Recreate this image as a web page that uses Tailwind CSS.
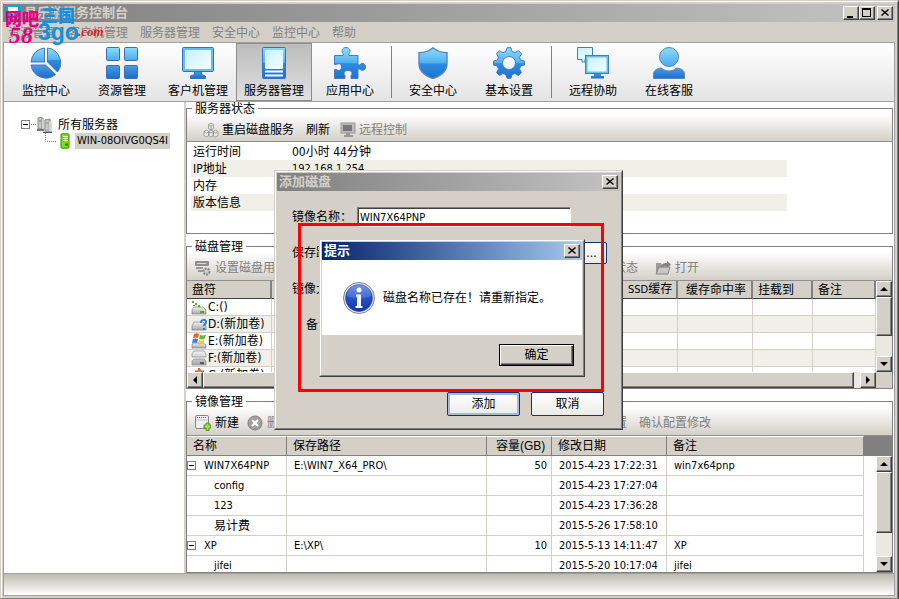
<!DOCTYPE html>
<html lang="zh-CN">
<head>
    <meta charset="UTF-8">
    <meta name="viewport" content="width=device-width, initial-scale=1.0">
    <title>易乐游服务控制台</title>
    <script src="https://cdn.jsdelivr.net/npm/@tailwindcss/browser@4"></script>
</head>
<body class="h-screen overflow-hidden bg-[#d4d0c8] font-['DejaVu_Sans_Condensed','Noto_Sans','Noto_Sans_CJK_SC',sans-serif] text-[12px] leading-4 text-black">

    <!-- Shared gradients -->
    <svg class="absolute h-0 w-0" aria-hidden="true">
        <defs>
            <linearGradient id="blue" x1="0" y1="0" x2="0" y2="1">
                <stop offset="0" stop-color="#8fdcfa"/>
                <stop offset=".5" stop-color="#4fb0ee"/>
                <stop offset=".52" stop-color="#2c8ce0"/>
                <stop offset="1" stop-color="#1a72d0"/>
            </linearGradient>
            <linearGradient id="light" x1="0" y1="0" x2="0" y2="1">
                <stop offset="0" stop-color="#8adcf8"/>
                <stop offset="1" stop-color="#4aaaf0"/>
            </linearGradient>
            <linearGradient id="deep" x1="0" y1="0" x2="0" y2="1">
                <stop offset="0" stop-color="#4a9ce4"/>
                <stop offset="1" stop-color="#1a6ccc"/>
            </linearGradient>
            <linearGradient id="screen" x1="0" y1="0" x2="1" y2="1">
                <stop offset="0" stop-color="#c8f2fd"/>
                <stop offset="1" stop-color="#f4fdff"/>
            </linearGradient>
            <linearGradient id="info" x1="0" y1="0" x2="0" y2="1">
                <stop offset="0" stop-color="#5c82e0"/>
                <stop offset=".5" stop-color="#2450c8"/>
                <stop offset="1" stop-color="#1434a8"/>
            </linearGradient>
            <linearGradient id="drive" x1="0" y1="0" x2="0" y2="1">
                <stop offset="0" stop-color="#f4f4f4"/>
                <stop offset="1" stop-color="#a4a6ac"/>
            </linearGradient>
        </defs>
    </svg>

    <div class="relative flex h-full flex-col border border-[#d4d0c8] border-r-[#404040] border-b-[#808080]">
        <div class="flex min-h-0 flex-1 flex-col border-t border-l border-r border-white border-r-[#808080] pt-[2px] pr-[2px] pb-[2px] pl-px">

            <!-- Title bar -->
            <header class="flex h-[18px] shrink-0 items-center bg-linear-to-r from-[#808080] to-[#c3c3c3] pr-[2px] pl-[2px]">
                <svg class="h-4 w-4" viewBox="0 0 16 16"><rect width="16" height="16" fill="#18a0d8"/><rect x="3" y="2" width="10" height="6" fill="#fff"/><path d="M2 13h12M8 8v5" stroke="#fff"/></svg>
                <h1 class="ml-[3px] flex-1 text-[13px] font-bold text-[#d4d0c8]">易乐游服务控制台</h1>
                <button aria-label="最小化" class="h-[14px] w-4 border border-white border-r-[#404040] border-b-[#404040] bg-[#d4d0c8] shadow-[inset_-1px_-1px_#808080]"><svg class="h-3 w-[14px]" viewBox="0 0 14 12"><path d="M3 9h6v2H3z"/></svg></button>
                <button aria-label="最大化" class="h-[14px] w-4 border border-white border-r-[#404040] border-b-[#404040] bg-[#d4d0c8] shadow-[inset_-1px_-1px_#808080]"><svg class="h-3 w-[14px]" viewBox="0 0 14 12"><path d="M2 1h9v9H2zM3 3v6h7V3z" fill-rule="evenodd"/></svg></button>
                <button aria-label="关闭" class="ml-[2px] h-[14px] w-4 border border-white border-r-[#404040] border-b-[#404040] bg-[#d4d0c8] shadow-[inset_-1px_-1px_#808080]"><svg class="h-3 w-[14px]" viewBox="0 0 14 12"><path d="M3.500 2.500l7 6M10.500 2.500l-7 6" stroke="#000" stroke-width="1.500"/></svg></button>
            </header>

            <!-- Menu -->
            <nav class="flex h-5 shrink-0 items-center gap-3 pt-px pl-[5px] text-[#808080]">
                <a href="#">资源管理</a>
                <a href="#">客户机管理</a>
                <a href="#">服务器管理</a>
                <a href="#">安全中心</a>
                <a href="#">监控中心</a>
                <a href="#">帮助</a>
            </nav>

            <!-- Main toolbar -->
            <div class="flex h-[60px] shrink-0 border border-[#a0a0a0] bg-linear-to-b from-white to-[#e4e4e4] pl-1">
                <button class="flex w-[76px] flex-col items-center gap-1 pt-1">
                    <svg class="h-8 w-8" viewBox="0 0 32 32" stroke="#4a78b8" stroke-width="1"><path d="M14.500 1A15 15 0 0 0 1 15h13.500z" fill="url(#light)"/><path d="M17.500 1v14l10 10A15 15 0 0 0 17.500 1z" fill="url(#blue)"/><path d="M1 18h14.500l10 9.500A15 15 0 0 1 1 18z" fill="url(#deep)"/></svg>
                    <span>监控中心</span>
                </button>
                <button class="flex w-[76px] flex-col items-center gap-1 pt-1">
                    <svg class="h-8 w-8" viewBox="0 0 32 32" stroke="#3c6cb4"><rect x=".5" y=".5" width="13" height="13" rx="1" fill="url(#light)"/><rect x="18.500" y=".5" width="13" height="13" rx="1" fill="url(#light)"/><rect x=".5" y="18.500" width="13" height="13" rx="1" fill="url(#deep)"/><rect x="18.500" y="18.500" width="13" height="13" rx="1" fill="url(#deep)"/></svg>
                    <span>资源管理</span>
                </button>
                <button class="flex w-[76px] flex-col items-center gap-1 pt-1">
                    <svg class="h-8 w-8" viewBox="0 0 32 32" stroke="#3470c4"><path d="M12.500 24h7v3.500l4 1.500v2.500h-15V29l4-1.500z" fill="url(#deep)"/><rect x=".5" y=".5" width="31" height="24" rx="1" fill="#64bcf4"/><rect x="3" y="3" width="26" height="19" fill="url(#screen)" stroke="none"/></svg>
                    <span>客户机管理</span>
                </button>
                <button aria-pressed="true" class="flex w-[76px] flex-col items-center gap-1 border border-[#8c8c8c] bg-linear-to-b from-[#bcbcbc] to-[#e0e0e0] pt-[3px]">
                    <svg class="h-8 w-8" viewBox="0 0 32 32"><rect x="4.500" y=".5" width="23" height="31" rx="1" fill="url(#blue)" stroke="#3470c4"/><rect x="7" y="3" width="18" height="19" rx="1" fill="url(#screen)"/><path d="M7 24.500h18M7 28.500h18" stroke="#fff" stroke-width="2"/></svg>
                    <span>服务器管理</span>
                </button>
                <button class="flex w-[76px] flex-col items-center gap-1 pt-1">
                    <svg class="h-8 w-8" viewBox="0 0 32 32"><path d="M.5 8.500h8.500V6.500c-2-2-1-6 3-6s5 4 3 6v2h9v9.500h2c1-3 5.500-2 5.500 2s-4.500 4-5.500 2h-2v9.500h-7v-3c2-2 1-5-3-5s-5 3-3 5v3H.5v-9h2c2 2 5 1 5-2.500s-3-4-5-2.500h-2z" fill="url(#blue)" stroke="#4a7cc0"/></svg>
                    <span>应用中心</span>
                </button>
                <div class="mx-[3px] my-[3px] w-px bg-[#808080]"></div>
                <button class="flex w-[76px] flex-col items-center gap-1 pt-1">
                    <svg class="h-8 w-8" viewBox="0 0 32 32"><path d="M16 .7c4 3.300 8 5 14 5v11c0 7-6 12-14 14.800C8 28.700 2 23.700 2 16.700v-11c6 0 10-1.700 14-5z" fill="url(#blue)" stroke="#5a84bc" stroke-width="1.400"/></svg>
                    <span>安全中心</span>
                </button>
                <button class="flex w-[76px] flex-col items-center gap-1 pt-1">
                    <svg class="h-8 w-8" viewBox="0 0 32 32"><path fill-rule="evenodd" stroke-linejoin="round" d="M14 .7h4l1 3.800 3 1.200 3.500-2 3 3-2 3.600 1.200 2.700 3.800 1v4l-3.800 1-1.200 3 2 3.500-3 3-3.500-2-3 1.200-1 3.600h-4l-1-3.600-3-1.200-3.500 2-3-3 2-3.500-1.200-3L.5 18v-4l3.800-1 1.200-2.700-2-3.600 3-3 3.500 2 3-1.200zM16 9.500a6.500 6.500 0 1 0 0 13 6.500 6.500 0 0 0 0-13z" fill="url(#blue)" stroke="#4a7cc0"/></svg>
                    <span>基本设置</span>
                </button>
                <div class="my-[3px] mr-[3px] ml-1 w-px bg-[#808080]"></div>
                <button class="flex w-[76px] flex-col items-center gap-1 pt-1">
                    <svg class="h-8 w-8" viewBox="0 0 32 32" stroke="#3a7cd0"><path d="M.5.5h15v12H8v2.500H5v-2.500H.5z" fill="url(#screen)"/><path d="M17 26h7v3h3v2.500H14V29h3z" fill="url(#deep)" stroke="none"/><rect x="8.500" y="8.500" width="23" height="18" fill="#64bcf4"/><rect x="10.500" y="10.500" width="19" height="14" fill="url(#screen)" stroke="none"/></svg>
                    <span>远程协助</span>
                </button>
                <button class="flex w-[76px] flex-col items-center gap-1 pt-1">
                    <svg class="h-8 w-8" viewBox="0 0 32 32" stroke="#5a84bc"><path d="M.5 31.500v-4c0-4 3-6 8-6.500 4 4 11 4 15 0 5 .5 8 2.500 8 6.500v4z" fill="url(#deep)"/><circle cx="16" cy="10" r="9.500" fill="url(#light)"/></svg>
                    <span>在线客服</span>
                </button>
            </div>

            <!-- Content -->
            <div class="flex min-h-0 flex-1 border-x border-[#a0a0a0] bg-white">
                <aside class="w-[180px] shrink-0 pt-[15px] pl-[17px]">
                    <div class="flex items-center">
                        <svg class="h-4 w-4" viewBox="0 0 16 16" fill="none"><rect x=".5" y="3.500" width="8" height="8" stroke="#808080"/><path d="M2 7.500h5" stroke="#000"/><path d="M10 7.500h6" stroke="#808080" stroke-dasharray="1 1"/></svg>
                        <svg class="h-4 w-4" viewBox="0 0 16 16"><path d="M1 1l4-1v12H1zM8 3l5-1v12H8z" fill="#c8c8c8" stroke="#888"/><path d="M5 1l2 1v11H5zM12 3l2 1v11h-2z" fill="#eee" stroke="#909090" stroke-width=".6"/><path d="M0 13h7M6 15.500h9" stroke="#505050" stroke-width="1.500"/><path d="M2 4h2M9.500 6h2" stroke="#50a050"/></svg>
                        <span class="ml-[5px]">所有服务器</span>
                    </div>
                    <div class="flex items-center pl-6">
                        <svg class="h-4 w-3" viewBox="0 0 12 16"><path d="M.5 0v8.500H12" fill="none" stroke="#808080" stroke-dasharray="1 1"/></svg>
                        <svg class="ml-[2px] h-4 w-3" viewBox="0 0 12 16"><rect x="2" y=".8" width="8" height="14.400" rx="1" fill="#7ce010" stroke="#389008"/><path d="M4 3.500h5M4 5.500h5M4 7.500h5" stroke="#e8ffc8"/><path d="M6 11.500h3" stroke="#287808" stroke-width="2"/></svg>
                        <span class="ml-1 bg-[#d4d0c8] px-[2px] text-[11px] whitespace-nowrap">WIN-08OIVG0QS4I</span>
                    </div>
                </aside>
                <div class="w-[2px] shrink-0 bg-[#d4d0c8]"></div>

                <main class="flex min-w-0 flex-1 flex-col pr-px">
                    <!-- Server status -->
                    <fieldset class="flex h-[132px] min-w-0 shrink-0 flex-col border border-[#808080]">
                        <legend class="ml-[5px] h-3 px-[3px] leading-[15px]">服务器状态</legend>
                        <div class="flex h-[28px] shrink-0 items-center border-b border-[#909090] bg-linear-to-b from-white to-[#d4d0c8] pt-1 pl-4 text-[#808080]">
                            <button class="flex items-center gap-[3px] text-black">
                                <svg class="h-4 w-4" viewBox="0 0 16 16" fill="#e8e8e8" stroke="#909090" stroke-width=".8"><path d="M5.500 2.500L8 1l2.500 1.500v4L8 8 5.500 6.500zM1 9.500L3.500 8 6 9.500v4L3.500 15 1 13.500zM10 9.500L12.500 8 15 9.500v4L12.500 15 10 13.500zM5.500 9.500L8 8l2.500 1.500v4L8 15l-2.500-1.500z"/><path d="M5.500 2.500L8 4l2.500-1.500M8 4v4M1 9.500L3.500 11 6 9.500M10 9.500l2.500 1.500L15 9.500M5.500 9.500L8 11l2.500-1.500"/></svg>
                                <span>重启磁盘服务</span>
                            </button>
                            <button class="ml-3 text-black">刷新</button>
                            <button class="ml-[10px] flex items-center gap-[3px]" disabled>
                                <svg class="h-4 w-4" viewBox="0 0 16 16"><rect x="1" y="1" width="14" height="10" fill="#bbb" stroke="#999"/><rect x="3" y="3" width="9" height="6" fill="#777"/><path d="M6 11h4v2h3v2H4v-2h2z" fill="#999"/></svg>
                                <span>远程控制</span>
                            </button>
                        </div>
                        <table class="mt-px mr-[105px] ml-1 table-fixed border-collapse text-left">
                            <tbody>
                                <tr class="h-[17px]"><th class="w-[100px] p-0 pl-[2px] font-normal">运行时间</th><td class="p-0 pl-px">00小时 44分钟</td></tr>
                                <tr class="h-[17px] bg-[#f1f0e8]"><th class="p-0 pl-[2px] font-normal">IP地址</th><td class="p-0 pl-px text-[11px]">192.168.1.254</td></tr>
                                <tr class="h-[17px]"><th class="p-0 pl-[2px] font-normal">内存</th><td class="p-0"></td></tr>
                                <tr class="h-[17px] bg-[#f1f0e8]"><th class="p-0 pl-[2px] font-normal">版本信息</th><td class="p-0"></td></tr>
                            </tbody>
                        </table>
                    </fieldset>

                    <!-- Disks -->
                    <fieldset class="mt-[6px] flex h-[149px] min-w-0 shrink-0 flex-col border border-[#808080]">
                        <legend class="ml-[5px] h-3 px-[3px] leading-[15px]">磁盘管理</legend>
                        <div class="flex h-[29px] shrink-0 items-center border-b border-[#909090] bg-linear-to-b from-white to-[#d4d0c8] pt-1 pl-2 text-[#808080]">
                            <button class="flex w-[395px] items-center gap-1" disabled>
                                <svg class="h-4 w-4" viewBox="0 0 16 16"><rect x="0" y="1" width="14" height="5" rx="1" fill="#909090"/><path d="M2 3.500h9" stroke="#ddd"/><path d="M1 8h7M3 11h5" stroke="#999" stroke-width="2"/><circle cx="11.500" cy="11.500" r="3" fill="#ccc" stroke="#888" stroke-width="2" stroke-dasharray="2 1"/></svg>
                                <span>设置磁盘用途</span>
                            </button>
                            <button class="w-[65px] text-left" disabled>查看状态</button>
                            <button class="flex items-center gap-1" disabled>
                                <svg class="h-4 w-4" viewBox="0 0 16 16"><path d="M1 3h5l1 2h6v9H1z" fill="#999"/><path d="M4 7h11l-2 7H1z" fill="#c8c8c8" stroke="#888"/><path d="M6 8c0-4 3-5 6-5V1l4 3.500L12 8V5.500c-2 0-4 .5-6 2.500z" fill="#808080"/></svg>
                                <span>打开</span>
                            </button>
                        </div>
                        <div class="flex h-[107px] shrink-0">
                            <div class="flex h-full min-w-0 flex-1 flex-col">
                                <div class="h-[91px] shrink-0 overflow-hidden">
                                    <table class="w-full table-fixed border-separate border-spacing-0 text-left [&_td]:border-r [&_td]:border-b [&_td]:border-[#d4d0c8] [&_td]:p-0 [&_th]:border-r-2 [&_th]:border-b [&_th]:border-r-[#808080] [&_th]:border-b-[#404040] [&_th]:bg-[#d4d0c8] [&_th]:p-0 [&_th]:pl-[5px] [&_th]:font-normal">
                                        <thead>
                                            <tr><th class="w-[85px]">盘符</th><th class="w-[351px]"></th><th class="w-[55px]"><span class="text-[11px]">SSD</span>缓存</th><th class="w-[75px]"><span class="pl-[3px]">缓存命中率</span></th><th class="w-[60px]">挂载到</th><th>备注</th></tr>
                                        </thead>
                                        <tbody class="[&_tr:nth-child(even)]:bg-[#f1f0e8]">
                                            <tr><td><div class="flex h-4 items-center gap-px pl-1"><svg class="h-4 w-4 shrink-0" viewBox="0 0 16 16"><path d="M3 8h9l3 3v4H1v-4z" fill="url(#drive)" stroke="#808080" stroke-width=".7"/><path d="M1 2h2v2H1zM4 4h2v2H4zM2 6h2v1H2zM7 6h2v2H7zM9 12h4v2H9z" fill="#48b020"/></svg>C:()</div></td><td></td><td></td><td></td><td></td><td></td></tr>
                                            <tr><td><div class="flex h-4 items-center gap-px pl-1"><svg class="h-4 w-4 shrink-0" viewBox="0 0 16 16"><path d="M3 6h9l3 4v4H1v-4z" fill="url(#drive)" stroke="#808890" stroke-width=".7"/><path d="M10 7c0-4 5-4 5-1 0 2-2 2-2 4M13 12v2" fill="none" stroke="#2878e0" stroke-width="2"/></svg>D:(新加卷)</div></td><td></td><td></td><td></td><td></td><td></td></tr>
                                            <tr><td><div class="flex h-4 items-center gap-px pl-1"><svg class="h-4 w-4 shrink-0" viewBox="0 0 16 16"><path d="M2 10h10l3 2v3H1v-3z" fill="url(#drive)" stroke="#808080" stroke-width=".7"/><path d="M3 1q3-1.500 5 0L7 5q-2-1-5 0z" fill="#f06020"/><path d="M9 2q3 1 6-.5L13.500 6q-3 1-5.500-.5z" fill="#68b830"/><path d="M2 6q3-1 5 0l-1 4q-3-1-5 0z" fill="#3880e0"/><path d="M8 7q3 1 5.500 0l-1.500 4q-3 1-5 0z" fill="#f8c820"/></svg>E:(新加卷)</div></td><td></td><td></td><td></td><td></td><td></td></tr>
                                            <tr><td><div class="flex h-4 items-center gap-px pl-1"><svg class="h-4 w-4 shrink-0" viewBox="0 0 16 16" fill="url(#drive)" stroke="#909090" stroke-width=".7"><path d="M3 1h10l2 3v3H1V4zM3 9h10l2 2v4H1v-4z"/><path d="M9 13h4" stroke="#404040" stroke-width="1.500"/></svg>F:(新加卷)</div></td><td></td><td></td><td></td><td></td><td></td></tr>
                                            <tr><td><div class="flex h-4 items-center gap-px pl-1"><svg class="h-4 w-4 shrink-0" viewBox="0 0 16 16"><path d="M3 8h9l3 3v4H1v-4z" fill="url(#drive)"/><path d="M8 1l2 3h3l-3 3H6L4 4h3z" fill="#f08040" stroke="#d05010"/></svg>G:(新加卷)</div></td><td></td><td></td><td></td><td></td><td></td></tr>
                                        </tbody>
                                    </table>
                                </div>
                                <!-- Horizontal scrollbar -->
                                <div class="flex h-4 shrink-0 bg-[#eae8e3]">
                                    <button aria-label="向左" class="w-4 border border-white border-r-[#404040] border-b-[#404040] bg-[#d4d0c8] shadow-[inset_-1px_-1px_#808080]"><svg class="h-[14px] w-[14px]" viewBox="0 0 14 14"><path d="M9 3v8L5 7z"/></svg></button>
                                    <div class="flex-1 border border-white border-r-[#404040] border-b-[#404040] bg-[#d4d0c8] shadow-[inset_-1px_-1px_#808080]"></div>
                                    <button aria-label="向右" class="ml-[6px] w-4 border border-white border-r-[#404040] border-b-[#404040] bg-[#d4d0c8] shadow-[inset_-1px_-1px_#808080]"><svg class="h-[14px] w-[14px]" viewBox="0 0 14 14"><path d="M5 3v8l4-4z"/></svg></button>
                                </div>
                            </div>
                            <!-- Vertical scrollbar -->
                            <div class="flex h-full w-4 shrink-0 flex-col bg-[#eae8e3]">
                                <button aria-label="向上" class="h-4 border border-white border-r-[#404040] border-b-[#404040] bg-[#d4d0c8] shadow-[inset_-1px_-1px_#808080]"><svg class="h-[14px] w-[14px]" viewBox="0 0 14 14"><path d="M3 9h8L7 5z"/></svg></button>
                                <div class="h-[39px] border border-white border-r-[#404040] border-b-[#404040] bg-[#d4d0c8] shadow-[inset_-1px_-1px_#808080]"></div>
                                <button aria-label="向下" class="mt-auto h-4 border border-white border-r-[#404040] border-b-[#404040] bg-[#d4d0c8] shadow-[inset_-1px_-1px_#808080]"><svg class="h-[14px] w-[14px]" viewBox="0 0 14 14"><path d="M3 5h8L7 9z"/></svg></button>
                                <div class="h-4 bg-[#d4d0c8]"></div>
                            </div>
                        </div>
                    </fieldset>

                    <!-- Images -->
                    <fieldset class="mt-[6px] flex min-h-0 min-w-0 flex-1 flex-col border border-[#808080]">
                        <legend class="ml-[5px] h-3 px-[3px] leading-[15px]">镜像管理</legend>
                        <div class="flex h-[29px] shrink-0 items-center border-b border-[#909090] bg-linear-to-b from-white to-[#d4d0c8] pt-1 pl-2 text-[#808080]">
                            <button class="flex items-center gap-1 text-black">
                                <svg class="h-4 w-4" viewBox="0 0 16 16"><rect x=".5" y=".5" width="13" height="13" rx="1.500" fill="#f0f0f0" stroke="#888"/><path d="M2 2.500h10" stroke="#b05050" stroke-dasharray="1 1"/><path d="M1 5h12" stroke="#c0c0c0"/><path d="M11 8h3v2h2v3h-2v2.500h-3V13H9v-3h2z" fill="#a0e050" stroke="#509020"/></svg>
                                <span>新建</span>
                            </button>
                            <button class="ml-2 flex w-[356px] items-center gap-1" disabled>
                                <svg class="h-4 w-4" viewBox="0 0 16 16"><circle cx="8" cy="8" r="7" fill="#a0a0a0" stroke="#808080"/><path d="M5 5l6 6M11 5l-6 6" stroke="#fff" stroke-width="2"/></svg>
                                <span>删除</span>
                            </button>
                            <button class="w-[36px] text-left whitespace-nowrap" disabled>配置</button>
                            <button disabled>确认配置修改</button>
                        </div>
                        <div class="relative min-h-0 flex-1 overflow-hidden">
                            <div class="h-5 w-full bg-[#808080]"></div>
                            <div class="-mt-5 mr-7">
                                <table class="w-full table-fixed border-separate border-spacing-0 text-left [&_td]:h-5 [&_td]:border-r [&_td]:border-b [&_td]:border-[#d4d0c8] [&_td]:p-0 [&_td]:pl-[7px] [&_td]:text-[11px] [&_th]:h-5 [&_th]:border-t [&_th]:border-r [&_th]:border-b [&_th]:border-t-white [&_th]:border-r-[#808080] [&_th]:border-b-[#808080] [&_th]:bg-[#d4d0c8] [&_th]:p-0 [&_th]:pl-[6px] [&_th]:font-normal">
                                    <thead>
                                        <tr><th class="w-[100px]">名称</th><th class="w-[200px]">保存路径</th><th class="w-[65px] whitespace-nowrap"><span class="pl-[3px]">容量</span><span class="font-['Liberation_Sans']">(GB)</span></th><th class="w-[115px]">修改日期</th><th>备注</th></tr>
                                    </thead>
                                    <tbody>
                                        <tr><td><div class="-ml-[7px] flex items-center gap-2"><svg class="h-[9px] w-[9px]" viewBox="0 0 9 9"><rect x=".5" y=".5" width="8" height="8" fill="#fff" stroke="#808080"/><path d="M2 4.500h5" stroke="#000"/></svg>WIN7X64PNP</div></td><td>E:\WIN7_X64_PRO\</td><td><div class="pr-1 text-right">50</div></td><td>2015-4-23 17:22:31</td><td>win7x64pnp</td></tr>
                                        <tr><td><div class="pl-5">config</div></td><td></td><td></td><td>2015-4-23 17:27:04</td><td></td></tr>
                                        <tr><td><div class="pl-5">123</div></td><td></td><td></td><td>2015-4-23 17:36:28</td><td></td></tr>
                                        <tr><td><div class="pl-5 text-[12px]">易计费</div></td><td></td><td></td><td>2015-5-26 17:58:10</td><td></td></tr>
                                        <tr><td><div class="-ml-[7px] flex items-center gap-2"><svg class="h-[9px] w-[9px]" viewBox="0 0 9 9"><rect x=".5" y=".5" width="8" height="8" fill="#fff" stroke="#808080"/><path d="M2 4.500h5" stroke="#000"/></svg>XP</div></td><td>E:\XP\</td><td><div class="pr-1 text-right">10</div></td><td>2015-5-13 14:11:47</td><td>XP</td></tr>
                                        <tr><td><div class="pl-5">jifei</div></td><td></td><td></td><td>2015-5-20 10:17:04</td><td>jifei</td></tr>
                                    </tbody>
                                </table>
                            </div>
                            <div class="absolute top-5 right-0 bottom-0 flex w-4 flex-col bg-[#eae8e3]">
                                <button aria-label="向上" class="h-4 border border-white border-r-[#404040] border-b-[#404040] bg-[#d4d0c8] shadow-[inset_-1px_-1px_#808080]"><svg class="h-[14px] w-[14px]" viewBox="0 0 14 14"><path d="M3 9h8L7 5z"/></svg></button>
                                <div class="h-[61px] border border-white border-r-[#404040] border-b-[#404040] bg-[#d4d0c8] shadow-[inset_-1px_-1px_#808080]"></div>
                                <button aria-label="向下" class="mt-auto h-4 border border-white border-r-[#404040] border-b-[#404040] bg-[#d4d0c8] shadow-[inset_-1px_-1px_#808080]"><svg class="h-[14px] w-[14px]" viewBox="0 0 14 14"><path d="M3 5h8L7 9z"/></svg></button>
                            </div>
                        </div>
                    </fieldset>
                </main>
            </div>

            <!-- Status bar -->
            <footer class="h-[23px] shrink-0 border border-[#a0a0a0] bg-linear-to-b from-[#bfbbb0] to-white"></footer>
        </div>
    </div>

    <!-- Watermark -->
    <div class="absolute top-1 left-[5px] h-10 w-[105px] font-bold whitespace-nowrap">
        <span class="absolute top-[5px] left-0 text-[17px] leading-5 font-black text-[#e4007f]">网吧</span>
        <span class="absolute top-[2px] left-[36px] text-[17px] leading-5 font-black text-[#1490e0]">三国</span>
        <span class="absolute top-[21px] left-[4px] font-['Liberation_Serif'] text-[24px] leading-5 text-[#e4007f] italic">58</span>
        <span class="absolute top-[16px] left-[33px] font-['Liberation_Sans'] text-[23px] leading-6 text-[#1490e0]">3go</span>
        <span class="absolute top-[20px] left-[73px] font-['Liberation_Serif'] text-[13px] leading-4 text-[#e02020] italic">.com</span>
    </div>

    <!-- Add disk dialog -->
    <div role="dialog" aria-label="添加磁盘" class="absolute top-[170px] left-[274px] h-[260px] w-[349px] border border-[#d4d0c8] border-r-[#404040] border-b-[#404040] bg-[#d4d0c8]">
        <div class="flex h-full flex-col border border-white border-r-[#808080] border-b-[#808080] p-px">
            <div class="flex h-[18px] shrink-0 items-center justify-between bg-linear-to-r from-[#808080] to-[#c3c3c3] pr-[2px] pl-[2px]">
                <h2 class="text-[13px] font-bold text-[#d4d0c8]">添加磁盘</h2>
                <button aria-label="关闭" class="h-[14px] w-4 border border-white border-r-[#404040] border-b-[#404040] bg-[#d4d0c8] shadow-[inset_-1px_-1px_#808080]"><svg class="h-3 w-[14px]" viewBox="0 0 14 12"><path d="M3.500 2.500l7 6M10.500 2.500l-7 6" stroke="#000" stroke-width="1.500"/></svg></button>
            </div>
            <form class="flex flex-1 flex-col gap-4 pt-4 pl-[15px]">
                <div class="flex h-5 items-center">
                    <label for="imageName" class="w-[65px] whitespace-nowrap">镜像名称：</label>
                    <input id="imageName" type="text" value="WIN7X64PNP" class="h-5 w-[214px] border border-[#808080] border-r-white border-b-white bg-white px-[2px] text-[11px] shadow-[inset_1px_1px_#404040] outline-none">
                </div>
                <div class="flex h-5 items-center">
                    <label for="savePath" class="w-[65px] whitespace-nowrap">保存路径：</label>
                    <input id="savePath" type="text" class="h-5 w-[214px] border border-[#808080] bg-white px-[2px] text-[11px]">
                    <button type="button" class="ml-2 h-[22px] w-7 rounded-[2px] border border-[#003c74] bg-linear-to-b from-white to-[#ecebe6] pr-[3px] text-center">...</button>
                </div>
                <div class="flex h-5 items-center">
                    <label for="imageSize" class="w-[65px] whitespace-nowrap">镜像大小：</label>
                    <input id="imageSize" type="text" class="h-5 w-[214px] border border-[#808080] bg-white px-[2px] text-[11px]">
                </div>
                <div class="flex h-5 items-center">
                    <label for="remark" class="w-[65px] pl-[14px] whitespace-nowrap">备注：</label>
                    <input id="remark" type="text" class="h-5 w-[214px] border border-[#808080] bg-white px-[2px] text-[11px]">
                </div>
                <div class="mt-auto mr-4 mb-[11px] flex justify-end gap-[11px]">
                    <button type="button" class="h-6 w-[73px] rounded-[2px] border border-[#003c74] bg-linear-to-b from-white to-[#ecebe6] shadow-[inset_0_0_0_2px_#a8b8dc]">添加</button>
                    <button type="button" class="h-6 w-[73px] rounded-[2px] border border-[#003c74] bg-linear-to-b from-white to-[#ecebe6]">取消</button>
                </div>
            </form>
        </div>
    </div>

    <!-- Highlight frame -->
    <div class="pointer-events-none absolute top-[223px] left-[298px] h-[169px] w-[306px] border-3 border-[#ff0000]"></div>

    <!-- Message box -->
    <div role="alertdialog" aria-label="提示" class="absolute top-[239px] left-[319px] h-[138px] w-[266px] border border-[#d4d0c8] border-r-[#404040] border-b-[#404040] bg-[#d4d0c8]">
        <div class="flex h-full flex-col border border-white border-r-[#808080] border-b-[#808080] p-px">
            <div class="flex h-[18px] shrink-0 items-center justify-between bg-linear-to-r from-[#0a246a] to-[#a6caf0] pr-[2px] pl-[2px]">
                <h2 class="text-[13px] font-bold text-white">提示</h2>
                <button aria-label="关闭" class="h-[14px] w-4 border border-white border-r-[#404040] border-b-[#404040] bg-[#d4d0c8] shadow-[inset_-1px_-1px_#808080]"><svg class="h-3 w-[14px]" viewBox="0 0 14 12"><path d="M3.500 2.500l7 6M10.500 2.500l-7 6" stroke="#000" stroke-width="1.500"/></svg></button>
            </div>
            <div class="flex h-[75px] shrink-0 items-center gap-2 bg-white pl-[21px]">
                <svg class="h-8 w-8" viewBox="0 0 32 32"><circle cx="16" cy="16" r="15.500" fill="#e8e8e8" stroke="#808080"/><circle cx="16" cy="16" r="13.500" fill="url(#info)" stroke="#2040a0" stroke-width=".6"/><path d="M4 14a12 12 0 0 1 24 0q-12 5-24 0z" fill="#fff" opacity=".15"/><circle cx="16" cy="8" r="2.500" fill="#fff"/><path d="M13 12.500h5V24h1.500v2h-7v-2H14v-9.500h-1z" fill="#f4f4f4"/></svg>
                <p>磁盘名称已存在！请重新指定。</p>
            </div>
            <div class="flex flex-1 items-center justify-end pr-2">
                <button class="h-[22px] w-[75px] border border-black bg-[#d4d0c8] shadow-[inset_1px_1px_#fff,inset_-1px_-1px_#404040,inset_-2px_-2px_#808080]">确定</button>
            </div>
        </div>
    </div>
</body>
</html>
